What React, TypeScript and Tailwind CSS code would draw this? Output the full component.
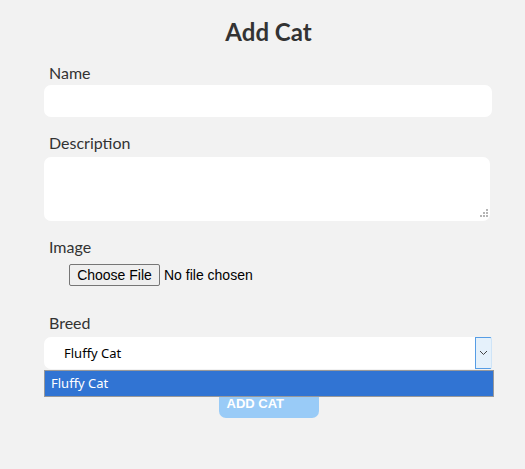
import React from "react";

const lato = { fontFamily: "Lato, 'Noto Sans', sans-serif" };

function Label({ children, first }: { children: React.ReactNode; first?: boolean }) {
  return (
    <label
      className={
        first
          ? "block pl-[5px] text-[16px] leading-6 text-[#333]"
          : "block pb-[4px] pl-[5px] text-[16px] leading-[20px] text-[#333]"
      }
      style={lato}
    >
      {children}
    </label>
  );
}

export default function App() {
  return (
    <div className="min-h-[469px] w-full bg-[#f2f2f2]">
      <div className="ml-[44px] w-[449px] pt-[16px]">
        <h1 className="text-center text-[24px] font-bold leading-[32px] text-[#333]" style={lato}>
          Add Cat
        </h1>

        <div className="mt-[13px]">
          <Label first>Name</Label>
          <input className="block h-[32px] w-[448px] rounded-[7px] bg-white px-3 outline-none" />
        </div>

        <div className="mt-[16px]">
          <Label>Description</Label>
          <div className="relative w-[446px]">
            <textarea className="block h-[64px] w-[446px] resize-none rounded-[7px] bg-white px-3 outline-none" />
            {/* resize grip */}
            <svg className="absolute bottom-[3px] right-[2px]" width="8" height="9" viewBox="0 0 8 9" fill="#b5b5b5">
              <rect x="6" y="0" width="2" height="2" />
              <rect x="3" y="3" width="2" height="2" />
              <rect x="6" y="3" width="2" height="2" />
              <rect x="0" y="6" width="2" height="2" />
              <rect x="3" y="6" width="2" height="2" />
              <rect x="6" y="6" width="2" height="2" />
            </svg>
          </div>
        </div>

        <div className="mt-[16px]">
          <Label>Image</Label>
          <div
            className="mt-[3px] flex items-center pl-[25px] text-[14px] text-black"
            style={{ fontFamily: "'Liberation Sans', Arial, sans-serif" }}
          >
            <button className="h-[22px] w-[91px] rounded-[2px] border border-[#767676] bg-[#efefef] text-center leading-[20px]">
              Choose File
            </button>
            <span className="ml-[4px]">No file chosen</span>
          </div>
        </div>

        <div className="relative mt-[27px]">
          <Label>Breed</Label>
          <div className="flex h-[32px] w-[448px] items-stretch rounded-l-[7px] bg-white">
            <span
              className="flex-1 pl-[20px] text-[13px] leading-[32px] text-black"
              style={{ fontFamily: "'Noto Sans', 'Liberation Sans', sans-serif" }}
            >
              Fluffy Cat
            </span>
            <span className="flex w-[17px] items-center justify-center rounded-r-[2px] border border-[#569de5] border-r-[#cfe4f7] bg-[#e5f1fb]">
              <svg width="9" height="6" viewBox="0 0 9 6" fill="none">
                <path d="M1 1l3.5 3.5L8 1" stroke="#444" strokeWidth="1" />
              </svg>
            </span>
          </div>

          <div className="absolute left-0 top-[57px] z-10 h-[27px] w-[450px] border border-[#999] bg-[#3174d3]">
            <span
              className="block pl-[6px] text-[13px] leading-[25px] text-white"
              style={{ fontFamily: "'Noto Sans', 'Liberation Sans', sans-serif" }}
            >
              Fluffy Cat
            </span>
          </div>
        </div>

        <div className="mt-[18px] flex justify-center">
          <button
            className="h-[31px] w-[100px] rounded-[7px] bg-[#99cbf7] pl-[8px] pt-[2px] text-left text-[13px] font-bold text-white"
            style={{ fontFamily: "'Liberation Sans', Arial, sans-serif" }}
          >
            ADD CAT
          </button>
        </div>
      </div>
    </div>
  );
}
